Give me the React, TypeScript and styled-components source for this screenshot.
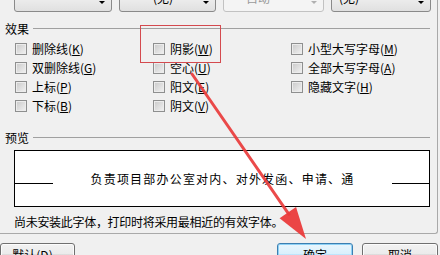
import React from "react";
import styled, { createGlobalStyle } from "styled-components";

const Global = createGlobalStyle`
  html, body { margin: 0; padding: 0; background: #f0f0f0; }
  #root { width: 440px; height: 255px; overflow: hidden; }
  * { box-sizing: border-box; }
`;

const Dialog = styled.div`
  position: relative;
  width: 440px;
  height: 255px;
  overflow: hidden;
  background: #f0f0f0;
  font-family: "Noto Sans CJK SC", "Noto Sans", sans-serif;
  font-size: 12px;
  color: #000;
`;

const Panel = styled.div`
  width: 438px;
  height: 234px;
  border-right: 1px solid #a9a9a9;
  border-bottom: 1px solid #a9a9a9;
  border-bottom-right-radius: 3px;
  display: flex;
  flex-direction: column;
`;

const TopRow = styled.div`
  display: flex;
  gap: 7px;
  padding-left: 14px;
  height: 12px;
`;

const Dropdown = styled.div<{ $w: number; $disabled?: boolean; $pl: number }>`
  width: ${(p) => p.$w}px;
  height: 23px;
  margin-top: -11px;
  flex: none;
  border: 1px solid ${(p) => (p.$disabled ? "#c2c2c2" : "#8a8a8a")};
  border-radius: 3px;
  background: ${(p) =>
    p.$disabled ? "#f4f4f4" : "linear-gradient(#f6f6f6, #e0e0e0)"};
  color: ${(p) => (p.$disabled ? "#9a9a9a" : "#000")};
  display: flex;
  align-items: flex-start;
  padding-left: ${(p) => p.$pl}px;
  position: relative;
  line-height: 16px;
  font-size: 12px;
`;

const DropArrow = styled.span<{ $disabled?: boolean }>`
  position: absolute;
  right: 6px;
  top: 11px;
  width: 0;
  height: 0;
  border-left: 3px solid transparent;
  border-right: 3px solid transparent;
  border-top: 3px solid ${(p) => (p.$disabled ? "#b0b0b0" : "#000")};
`;

const SectionHeader = styled.div<{ $mt: number }>`
  display: flex;
  align-items: center;
  margin-top: ${(p) => p.$mt}px;
  padding-left: 5px;
  height: 14px;
  line-height: 14px;
  width: 430px;
`;

const SectionLine = styled.div`
  flex: 1;
  height: 1px;
  background: #a0a0a0;
  margin-left: 4px;
  margin-top: -1px;
`;

const OptionGrid = styled.div`
  display: grid;
  grid-template-columns: 138px 138px 138px;
  grid-auto-flow: column;
  grid-template-rows: repeat(4, 19px);
  padding-left: 15px;
  margin-top: 3px;
`;

const Option = styled.label`
  display: flex;
  align-items: center;
  gap: 5px;
  white-space: nowrap;
`;

const Box = styled.span`
  width: 12px;
  height: 12px;
  flex: none;
  border: 1px solid #8e8f8f;
  background: linear-gradient(135deg, #c9c9c9, #f2f2f2);
  box-shadow: inset 0 0 0 1px #ececec;
`;

const Key = styled.u`
  text-decoration: underline;
`;

const PreviewBox = styled.div`
  margin: 5px 0 0 14px;
  width: 416px;
  height: 57px;
  border: 1px solid #000;
  background: #fff;
  display: grid;
  grid-template-columns: 38px 1fr 37px;
  align-items: center;
`;

const BaseLine = styled.div`
  height: 1px;
  background: #000;
  margin-top: 9px;
`;

const PreviewText = styled.div`
  text-align: center;
  letter-spacing: 1.2px;
  font-size: 12px;
  line-height: 14px;
`;

const Note = styled.div`
  margin: 8px 0 0 14px;
  height: 14px;
  line-height: 14px;
  letter-spacing: -0.3px;
  white-space: nowrap;
`;

const ButtonRow = styled.div`
  display: flex;
  justify-content: space-between;
  margin-top: 9px;
  padding-right: 2px;
`;

const ButtonGroup = styled.div`
  display: flex;
  gap: 9px;
`;

const Button = styled.div<{ $w: number; $default?: boolean }>`
  width: ${(p) => p.$w}px;
  height: 22px;
  border: 1px solid ${(p) => (p.$default ? "#3c7fb1" : "#707070")};
  border-radius: 3px;
  background: ${(p) =>
    p.$default
      ? "linear-gradient(#eaf6fd, #d9f0fc 50%, #bee6fd 51%, #a7d9f5)"
      : "linear-gradient(#f2f2f2, #ebebeb 50%, #dddddd 51%, #cfcfcf)"};
  box-shadow: ${(p) => (p.$default ? "inset 0 0 0 1px #8ed1f5" : "inset 0 0 0 1px #fcfcfc")};
  display: flex;
  justify-content: center;
  align-items: center;
  line-height: 20px;
  padding-top: 2px;
`;

const Overlay = styled.svg`
  position: absolute;
  left: 0;
  top: 0;
  pointer-events: none;
`;

type Opt = { label: string; key: string };

const col1: Opt[] = [
  { label: "删除线", key: "K" },
  { label: "双删除线", key: "G" },
  { label: "上标", key: "P" },
  { label: "下标", key: "B" },
];
const col2: Opt[] = [
  { label: "阴影", key: "W" },
  { label: "空心", key: "U" },
  { label: "阳文", key: "E" },
  { label: "阴文", key: "V" },
];
const col3: Opt[] = [
  { label: "小型大写字母", key: "M" },
  { label: "全部大写字母", key: "A" },
  { label: "隐藏文字", key: "H" },
];

const OptionItem = ({ o }: { o: Opt }) => (
  <Option>
    <Box />
    <span>
      {o.label}(<Key>{o.key}</Key>)
    </span>
  </Option>
);

export default function App() {
  const tip = { x: 306, y: 239 };
  const start = { x: 192, y: 74 };
  const dx = tip.x - start.x;
  const dy = tip.y - start.y;
  const len = Math.hypot(dx, dy);
  const ux = dx / len;
  const uy = dy / len;
  const hl = 32;
  const hw = 10;
  const bx = tip.x - ux * hl;
  const by = tip.y - uy * hl;
  const p1 = `${bx - uy * hw},${by + ux * hw}`;
  const p2 = `${bx + uy * hw},${by - ux * hw}`;

  return (
    <Dialog>
      <Global />
      <Panel>
        <TopRow>
          <Dropdown $w={98} $pl={10}>
            <DropArrow />
          </Dropdown>
          <Dropdown $w={97} $pl={33}>
            (无)
            <DropArrow />
          </Dropdown>
          <Dropdown $w={101} $disabled $pl={22}>
            自动
            <DropArrow $disabled />
          </Dropdown>
          <Dropdown $w={100} $pl={7}>
            (无)
            <DropArrow />
          </Dropdown>
        </TopRow>

        <SectionHeader $mt={10}>
          效果
          <SectionLine />
        </SectionHeader>

        <OptionGrid>
          {col1.map((o) => (
            <OptionItem key={o.key} o={o} />
          ))}
          {col2.map((o) => (
            <OptionItem key={o.key} o={o} />
          ))}
          {col3.map((o) => (
            <OptionItem key={o.key} o={o} />
          ))}
        </OptionGrid>

        <SectionHeader $mt={16}>
          预览
          <SectionLine />
        </SectionHeader>

        <PreviewBox>
          <BaseLine />
          <PreviewText>负责项目部办公室对内、对外发函、申请、通</PreviewText>
          <BaseLine />
        </PreviewBox>

        <Note>尚未安装此字体，打印时将采用最相近的有效字体。</Note>
      </Panel>

      <ButtonRow>
        <Button $w={75}>
          默认(<Key>D</Key>)...
        </Button>
        <ButtonGroup>
          <Button $w={76} $default>
            确定
          </Button>
          <Button $w={76}>取消</Button>
        </ButtonGroup>
      </ButtonRow>

      <Overlay width={440} height={255} viewBox="0 0 440 255">
        <rect x={140.5} y={25.5} width={80} height={37} fill="none" stroke="#d44a4f" strokeWidth={1} />
        <line
          x1={start.x}
          y1={start.y}
          x2={bx + ux * 2}
          y2={by + uy * 2}
          stroke="#ea3b3b"
          strokeWidth={3}
          strokeLinecap="round"
          opacity={0.92}
        />
        <polygon points={`${tip.x},${tip.y} ${p1} ${p2}`} fill="#ea3b3b" opacity={0.95} />
      </Overlay>
    </Dialog>
  );
}
